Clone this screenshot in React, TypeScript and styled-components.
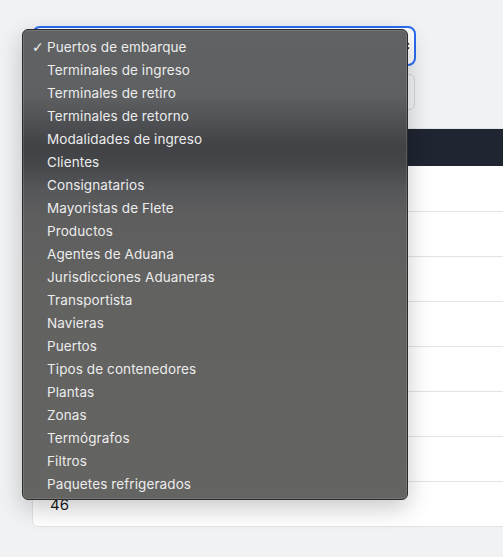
import React from 'react';
import styled, { createGlobalStyle } from 'styled-components';

// Opciones del catálogo que se muestran en el menú desplegable
const options = [
  'Puertos de embarque',
  'Terminales de ingreso',
  'Terminales de retiro',
  'Terminales de retorno',
  'Modalidades de ingreso',
  'Clientes',
  'Consignatarios',
  'Mayoristas de Flete',
  'Productos',
  'Agentes de Aduana',
  'Jurisdicciones Aduaneras',
  'Transportista',
  'Navieras',
  'Puertos',
  'Tipos de contenedores',
  'Plantas',
  'Zonas',
  'Termógrafos',
  'Filtros',
  'Paquetes refrigerados',
];

// Solo la última fila queda a la vista bajo el menú abierto
const rows = ['', '', '', '', '', '', '', '46'];

const selected = 0;

const App: React.FC = () => {
  return (
    <>
      <GlobalStyle />
      <Page>
        <Filters>
          <SelectBox>
            <Chevron viewBox="0 0 8 12" width="8" height="12">
              <path d="M1 4.5 L4 1.5 L7 4.5 M1 7.5 L4 10.5 L7 7.5" fill="none" stroke="#222" strokeWidth="1.4" />
            </Chevron>
          </SelectBox>
          <SearchInput aria-label="Buscar" />
        </Filters>

        <Card>
          <TableHeader />
          {rows.map((id, i) => (
            <Row key={i}>
              <Cell>{id}</Cell>
            </Row>
          ))}
        </Card>

        <Menu>
          {options.map((option, i) => (
            <MenuItem key={option}>
              <Check>{i === selected ? '✓' : ''}</Check>
              {option}
            </MenuItem>
          ))}
        </Menu>
      </Page>
    </>
  );
};

const GlobalStyle = createGlobalStyle`
  html, body {
    margin: 0;
    padding: 0;
    background: #f1f2f4;
    overflow: hidden;
  }
`;

const Page = styled.div`
  position: relative;
  height: 557px;
  padding: 26px 0 0 32px;
  box-sizing: border-box;
  overflow: hidden;
  font-family: Inter, 'Liberation Sans', sans-serif;
`;

const Filters = styled.div`
  display: flex;
  flex-direction: column;
  gap: 8px;
  width: 384px;
`;

const SelectBox = styled.div`
  display: flex;
  align-items: center;
  justify-content: flex-end;
  height: 40px;
  box-sizing: border-box;
  padding: 0 4px 0 14px;
  background: #ffffff;
  border: 2px solid #2d6cf0;
  border-radius: 8px;
`;

const Chevron = styled.svg`
  display: block;
`;

const SearchInput = styled.input`
  width: 383px;
  height: 36px;
  box-sizing: border-box;
  border: 1px solid #d3d6db;
  border-radius: 6px;
  background: #f4f5f7;
  padding: 0 12px;
  outline: none;
`;

const Card = styled.div`
  margin-top: 18px;
  width: 540px;
  background: #ffffff;
  border: 1px solid #e1e3e6;
  border-radius: 6px;
  overflow: hidden;
`;

const TableHeader = styled.div`
  height: 37px;
  background: #1f2531;
`;

const Row = styled.div`
  display: flex;
  height: 45px;
  align-items: center;
  padding: 0 17px;
  box-sizing: border-box;

  & + & {
    border-top: 1px solid #e2e3e5;
  }
`;

const Cell = styled.div`
  color: #1d1d1f;
  font-size: 15px;
`;

const Menu = styled.div`
  position: absolute;
  left: 22px;
  top: 29px;
  width: 386px;
  height: 471px;
  box-sizing: border-box;
  padding: 5px 0;
  border: 1px solid #2b2b2c;
  border-radius: 6px;
  box-shadow: inset 0 0 0 1px rgba(255, 255, 255, 0.12), 0 8px 24px rgba(0, 0, 0, 0.22);
  background: linear-gradient(
    180deg,
    #606264 0%,
    #5e6062 14%,
    #4d4f52 20%,
    #404246 25%,
    #45474a 29%,
    #56575a 34%,
    #5e5e5e 40%,
    #626261 55%,
    #646462 100%
  );
`;

const MenuItem = styled.div`
  display: flex;
  align-items: center;
  height: 23px;
  padding-left: 9px;
  color: #ececec;
  font-size: 13.5px;
  letter-spacing: 0.1px;
`;

const Check = styled.span`
  width: 15px;
  font-family: 'DejaVu Sans', sans-serif;
  font-size: 14px;
  line-height: 1;
  color: #efefef;
`;

export default App;
